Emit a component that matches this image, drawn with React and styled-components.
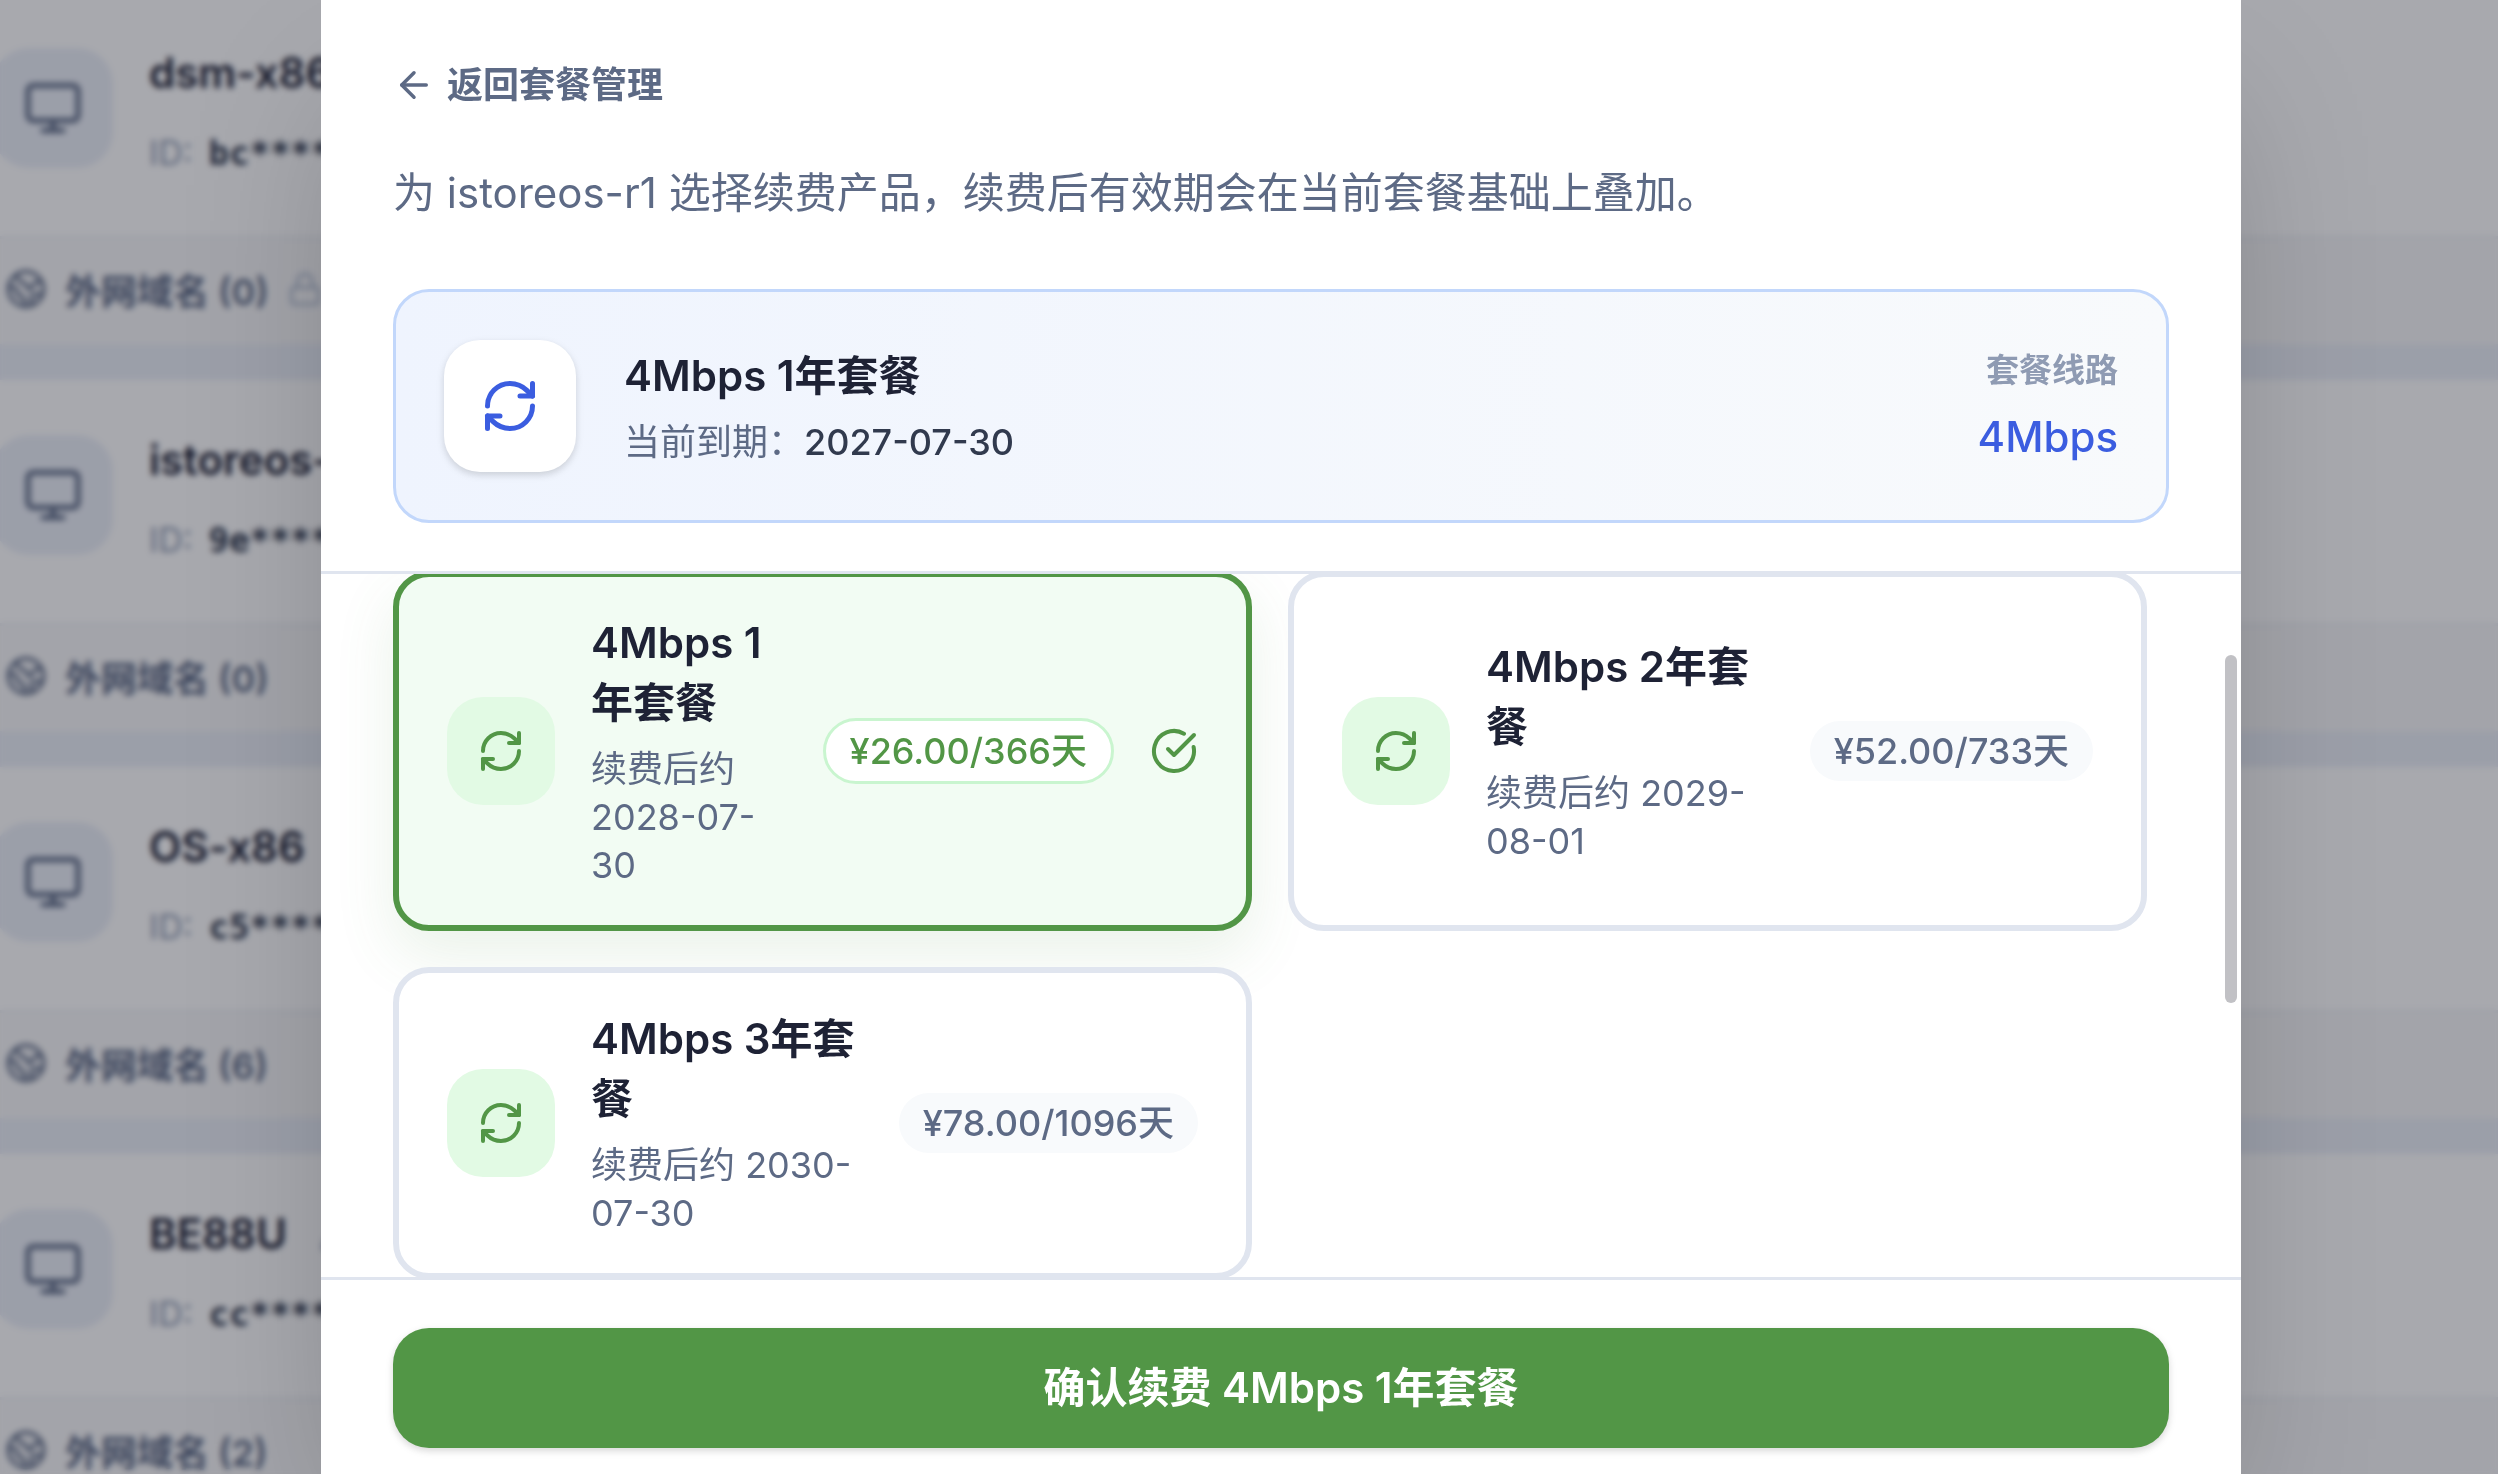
import React, { useState } from 'react'
import styled, { createGlobalStyle } from "styled-components";
import { ArrowLeft, CircleCheckBig, Earth, Lock, Monitor, Pencil, RefreshCw } from "lucide-react";

const GlobalStyle = createGlobalStyle`
  * {
    box-sizing: border-box;
  }
  body {
    margin: 0;
    background-color: #ecf0f8;
    font-family: Inter, "Noto Sans CJK SC", sans-serif;
    overflow: hidden;
  }
  h1, h2, h3, p {
    margin: 0;
    font-weight: 400;
  }
  button {
    font-family: inherit;
    cursor: pointer;
  }
  svg {
    flex-shrink: 0;
  }
`;

const Page = styled.main`
  height: 100vh;
  overflow: hidden;
`;

const DeviceList = styled.div`
  display: flex;
  flex-direction: column;
  gap: 36px;
  margin-top: -7px;
`;

const Device = styled.article`
  background-color: white;
`;

const DeviceTop = styled.div`
  display: flex;
  gap: 36px;
  height: 243px;
  padding: 55px 0 0;
  margin-left: -7px;
`;

const DeviceIcon = styled.div`
  display: flex;
  align-items: center;
  justify-content: center;
  width: 120px;
  height: 120px;
  border-radius: 36px;
  background-color: #ecf0f8;
  color: #5d6a85;
`;

const DeviceName = styled.h3`
  display: flex;
  align-items: center;
  gap: 33px;
  font-size: 42px;
  line-height: 50px;
  font-weight: 600;
  color: #1e2235;
`;

const DeviceId = styled.p`
  display: flex;
  align-items: center;
  gap: 16px;
  margin-top: 30px;
  font-size: 34px;
  line-height: 50px;
  color: #8f9bb3;

  b {
    font-family: "DejaVu Sans Mono", monospace;
    color: #313a4e;
  }
`;

const DeviceBottom = styled.div`
  display: flex;
  align-items: center;
  gap: 18px;
  height: 108px;
  padding: 0 0 6px 5px;
  border-top: 3px solid #eff1f6;
  background-color: #f8f8f9;
  font-size: 36px;
  font-weight: 600;
  color: #5d6a85;
`;

const LockIcon = styled(Lock)`
  color: #b4bfd2;
`;

const Overlay = styled.div`
  position: fixed;
  inset: 0;
  display: flex;
  padding: 0 257px 0 321px;
  background-color: rgba(7, 10, 22, 0.35);
  backdrop-filter: blur(3px);
`;

const Modal = styled.section`
  flex: 1;
  min-width: 0;
  display: flex;
  flex-direction: column;
  background-color: white;
  box-shadow: 0 75px 150px -36px rgba(0, 0, 0, 0.25);
`;

const Header = styled.header`
  padding: 61px 72px 48px;
  border-bottom: 3px solid #e0e5ef;
`;

const Back = styled.button`
  display: flex;
  align-items: center;
  gap: 12px;
  padding: 0;
  border: none;
  background: none;
  font-size: 36px;
  line-height: 48px;
  font-weight: 600;
  color: #5d6a85;
`;

const Description = styled.p`
  margin: 48px 0 60px;
  font-size: 42px;
  line-height: 72px;
  color: #5d6a85;
`;

const Current = styled.div`
  display: flex;
  align-items: center;
  gap: 48px;
  padding: 48px;
  border: 3px solid #c2d7fb;
  border-radius: 36px;
  background: linear-gradient(90deg, #eff4fe, #f8fafc);
`;

const CurrentIcon = styled.div`
  display: flex;
  align-items: center;
  justify-content: center;
  width: 132px;
  height: 132px;
  border-radius: 36px;
  background-color: white;
  color: #3b5de0;
  box-shadow: 0 3px 9px rgba(0, 0, 0, 0.1), 0 3px 6px rgba(0, 0, 0, 0.06);
`;

const Info = styled.div`
  flex: 1;
  min-width: 0;
  display: flex;
  flex-direction: column;
  gap: 12px;
`;

const Name = styled.h2`
  font-size: 42px;
  line-height: 60px;
  font-weight: 600;
  color: #1e2235;
`;

const Expire = styled.p`
  font-size: 36px;
  line-height: 48px;
  color: #5d6a85;

  b {
    font-weight: 500;
    color: #313a4e;
  }
`;

const Line = styled.div`
  display: flex;
  flex-direction: column;
  gap: 12px;
  text-align: right;
  font-size: 33px;
  line-height: 50px;
  font-weight: 600;
  color: #8f9bb3;

  strong {
    font-size: 42px;
    line-height: 60px;
    font-weight: 500;
    color: #3b5de0;
  }
`;

const Body = styled.div`
  flex: 1;
  min-height: 0;
  display: flex;
  overflow: hidden;
`;

const Plans = styled.div`
  flex: 1;
  min-width: 0;
  display: grid;
  grid-template-columns: 1fr 1fr;
  gap: 36px;
  align-content: start;
  margin-top: -3px;
  padding: 0 72px;
`;

const Plan = styled.button`
  display: flex;
  align-items: center;
  gap: 36px;
  min-width: 0;
  padding: 36px 48px;
  border: 6px solid ${(props) => (props.$active ? "#529646" : "#e0e5ef")};
  border-radius: 36px;
  background-color: ${(props) => (props.$active ? "#f2fcf3" : "white")};
  box-shadow: ${(props) => (props.$active ? "0 24px 60px rgba(82, 150, 70, 0.12)" : "none")};
  text-align: left;
  color: #529646;
`;

const PlanIcon = styled.span`
  display: flex;
  align-items: center;
  justify-content: center;
  flex-shrink: 0;
  width: 108px;
  height: 108px;
  border-radius: 36px;
  background-color: #e2fae4;
`;

const Price = styled.span`
  flex-shrink: 0;
  padding: 6px 24px;
  border: ${(props) => (props.$active ? "3px solid #c9f5cf" : "none")};
  border-radius: 36px;
  background-color: ${(props) => (props.$active ? "white" : "#f8fafc")};
  font-size: 36px;
  line-height: 48px;
  font-weight: 500;
  white-space: nowrap;
  color: ${(props) => (props.$active ? "#529646" : "#5d6a85")};
`;

const Track = styled.div`
  width: 22px;
  padding: 81px 4px 0 6px;
`;

const Thumb = styled.div`
  height: 348px;
  border-radius: 6px;
  background-color: #c1c1c5;
`;

const Footer = styled.footer`
  padding: 48px 72px 26px;
  border-top: 3px solid #e0e5ef;
`;

const Confirm = styled.button`
  display: block;
  width: 100%;
  padding: 30px;
  border: none;
  border-radius: 36px;
  background-color: #529646;
  box-shadow: 0 3px 9px rgba(0, 0, 0, 0.1), 0 3px 6px rgba(0, 0, 0, 0.06);
  font-size: 42px;
  line-height: 60px;
  font-weight: 600;
  color: white;
`;

const devices = [
  { name: "dsm-x86", id: "bc********", domains: 0, locked: true },
  { name: "istoreos-r1", id: "9e********", domains: 0 },
  { name: "OS-x86", id: "c5********", domains: 6 },
  { name: "BE88U", id: "cc********", domains: 2 },
]

const plans = [
  { name: "4Mbps 1年套餐", expire: "2028-07-30", price: "¥26.00/366天" },
  { name: "4Mbps 2年套餐", expire: "2029-08-01", price: "¥52.00/733天" },
  { name: "4Mbps 3年套餐", expire: "2030-07-30", price: "¥78.00/1096天" },
]

const App = () => {
  const [selected, setSelected] = useState(0)

  return (
    <>
      <GlobalStyle />
      <Page>
        <DeviceList>
          {devices.map((device) => (
            <Device key={device.name}>
              <DeviceTop>
                <DeviceIcon><Monitor size={60} /></DeviceIcon>
                <div>
                  <DeviceName>{device.name}<Pencil size={36} color="#8f9bb3" /></DeviceName>
                  <DeviceId>ID: <b>{device.id}</b></DeviceId>
                </div>
              </DeviceTop>
              <DeviceBottom>
                <Earth size={42} />
                外网域名 ({device.domains})
                {device.locked && <LockIcon size={36} />}
              </DeviceBottom>
            </Device>
          ))}
        </DeviceList>
      </Page>
      <Overlay>
        <Modal role="dialog" aria-label="续费">
          <Header>
            <Back type="button"><ArrowLeft size={42} />返回套餐管理</Back>
            <Description>为 istoreos-r1 选择续费产品，续费后有效期会在当前套餐基础上叠加。</Description>
            <Current>
              <CurrentIcon><RefreshCw size={60} /></CurrentIcon>
              <Info>
                <Name>4Mbps 1年套餐</Name>
                <Expire>当前到期：<b>2027-07-30</b></Expire>
              </Info>
              <Line>套餐线路<strong>4Mbps</strong></Line>
            </Current>
          </Header>
          <Body>
            <Plans>
              {plans.map((plan, i) => (
                <Plan key={plan.name} type="button" aria-pressed={selected === i} $active={selected === i} onClick={() => setSelected(i)}>
                  <PlanIcon><RefreshCw size={48} /></PlanIcon>
                  <Info as="span">
                    <Name as="span">{plan.name}</Name>
                    <Expire as="span">续费后约 {plan.expire}</Expire>
                  </Info>
                  <Price $active={selected === i}>{plan.price}</Price>
                  {selected === i && <CircleCheckBig size={48} />}
                </Plan>
              ))}
            </Plans>
            <Track><Thumb /></Track>
          </Body>
          <Footer>
            <Confirm type="button">确认续费 {plans[selected].name}</Confirm>
          </Footer>
        </Modal>
      </Overlay>
    </>
  );
};

export default App;
